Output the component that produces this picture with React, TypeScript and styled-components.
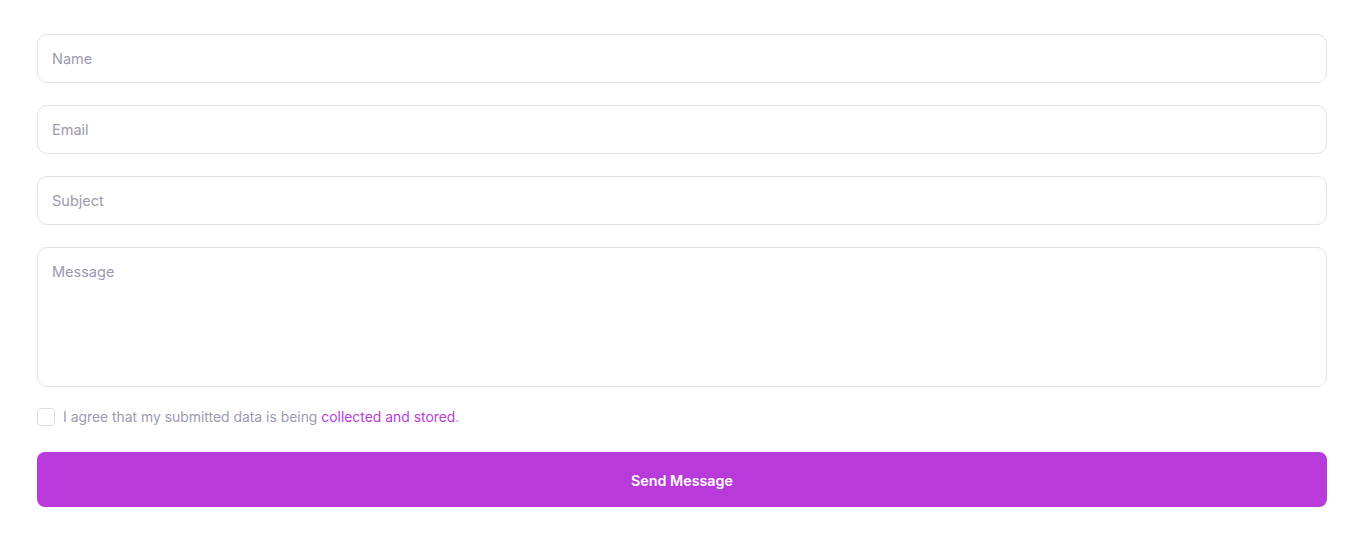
import React from "react";
import styled, { createGlobalStyle } from "styled-components";

const Global = createGlobalStyle`
  html, body { margin: 0; padding: 0; background: #ffffff; }
  body { font-family: "Inter", "Noto Sans", sans-serif; }
  * { box-sizing: border-box; }
`;

const Form = styled.form`
  display: flex;
  flex-direction: column;
  padding: 34px 35px 0 37px;
`;

const Field = styled.input`
  display: block;
  width: 100%;
  height: 49px;
  margin: 0 0 22px;
  padding: 0 14px;
  border: 1px solid #e2e1e8;
  border-radius: 10px;
  background: #fff;
  font-family: "Inter", sans-serif;
  font-size: 14.5px;
  color: #3b3a4a;
  outline: none;
  &::placeholder { color: #9c99b0; }
`;

const Area = styled.textarea`
  display: block;
  width: 100%;
  height: 140px;
  margin: 0;
  padding: 14px 14px;
  border: 1px solid #e2e1e8;
  border-radius: 10px;
  background: #fff;
  font-family: "Inter", sans-serif;
  font-size: 14.5px;
  line-height: 20px;
  resize: none;
  outline: none;
  &::placeholder { color: #9c99b0; }
`;

const Agree = styled.label`
  display: flex;
  align-items: center;
  gap: 8px;
  margin-top: 21px;
  height: 18px;
  font-size: 13.9px;
  line-height: 18px;
  color: #9c99b0;
`;

const Box = styled.span`
  width: 18px;
  height: 18px;
  border: 1px solid #dddce5;
  border-radius: 4px;
  background: #fff;
  flex: none;
`;

const Link = styled.a`
  color: #b93adb;
  text-decoration: none;
`;

const Button = styled.button`
  margin-top: 26px;
  width: 100%;
  height: 55px;
  border: none;
  border-radius: 8px;
  background: #b93adb;
  color: #fff;
  font-family: "Inter", sans-serif;
  font-weight: 600;
  font-size: 14.3px;
  padding-top: 2px;
  cursor: pointer;
`;

export default function App() {
  return (
    <>
      <Global />
      <Form onSubmit={(e) => e.preventDefault()}>
        <Field placeholder="Name" />
        <Field placeholder="Email" />
        <Field placeholder="Subject" />
        <Area placeholder="Message" />
        <Agree>
          <Box />
          <span>
            I agree that my submitted data is being <Link href="#">collected and stored</Link>.
          </span>
        </Agree>
        <Button type="submit">Send Message</Button>
      </Form>
    </>
  );
}
